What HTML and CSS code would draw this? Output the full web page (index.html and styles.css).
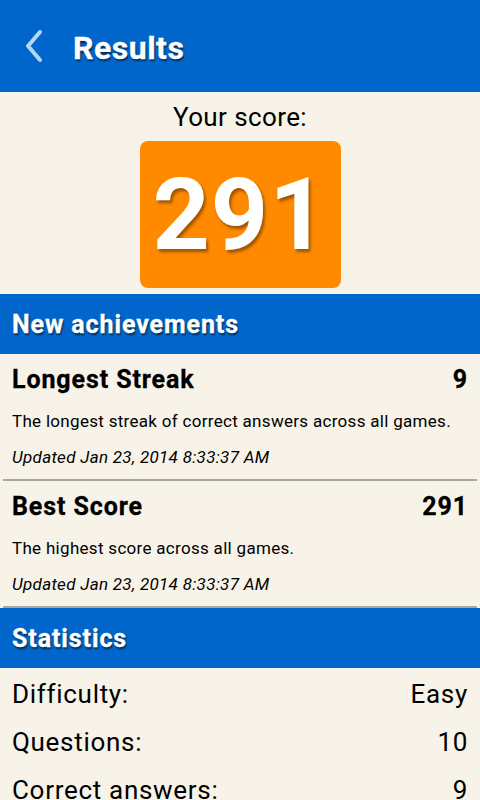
FILE: index.html
```html
<!doctype html>
<html lang="en">
  <head>
    <title>Results</title>
    <link rel="stylesheet" href="styles.css">
  </head>
  <body>
    <header class="topbar">
      <svg class="back" width="24" height="34" viewBox="0 0 24 34">
        <polyline points="17,3 5,17 17,31" fill="none" stroke="#b6d6f6" stroke-width="4" stroke-linecap="round" stroke-linejoin="round"/>
      </svg>
      <h1>Results</h1>
    </header>

    <section class="score">
      <div class="score-label">Your score:</div>
      <div class="score-box">291</div>
    </section>

    <h2 class="section-title">New achievements</h2>
    <div class="achievement">
      <div class="achievement-head">
        <span>Longest Streak</span>
        <span>9</span>
      </div>
      <p class="achievement-desc">The longest streak of correct answers across all games.</p>
      <p class="achievement-date">Updated Jan 23, 2014 8:33:37 AM</p>
    </div>
    <div class="achievement">
      <div class="achievement-head">
        <span>Best Score</span>
        <span>291</span>
      </div>
      <p class="achievement-desc">The highest score across all games.</p>
      <p class="achievement-date">Updated Jan 23, 2014 8:33:37 AM</p>
    </div>

    <h2 class="section-title">Statistics</h2>
    <div class="stats">
      <div class="stat"><span>Difficulty:</span><span>Easy</span></div>
      <div class="stat"><span>Questions:</span><span>10</span></div>
      <div class="stat"><span>Correct answers:</span><span>9</span></div>
    </div>
  </body>
</html>
```

FILE: styles.css
```css
body {
  font-family: Roboto, "Liberation Sans", sans-serif;
  background-color: #f7f3e8;
  color: #000;
  margin: 0;
  padding: 0;
  width: 480px;
  height: 800px;
  overflow: hidden;
}

.topbar {
  background-color: #0066cc;
  height: 92px;
  display: flex;
  align-items: center;
  padding-left: 23px;
  box-sizing: border-box;
}

.back {
  display: block;
  margin-right: 26px;
}

.topbar h1 {
  margin: 4px 0 0;
  color: #fff;
  font-size: 32px;
  font-weight: bold;
  letter-spacing: 0.5px;
  -webkit-text-stroke: 0.3px #fff;
  text-shadow: 1px 2px 2px rgba(0, 0, 0, 0.6);
}

.score {
  display: flex;
  flex-direction: column;
  align-items: center;
  padding-top: 7px;
  height: 202px;
  box-sizing: border-box;
}

.score-label {
  font-size: 26px;
  line-height: 36px;
  letter-spacing: 0.4px;
}

.score-box {
  margin-top: 6px;
  width: 201px;
  height: 147px;
  background-color: #ff8a00;
  border-radius: 8px;
  color: #fff;
  font-size: 100px;
  font-weight: bold;
  letter-spacing: 1px;
  line-height: 147px;
  text-align: center;
  text-shadow: 2px 3px 3px rgba(120, 60, 0, 0.7);
}

.section-title {
  margin: 0;
  height: 60px;
  line-height: 62px;
  background-color: #0066cc;
  color: #fff;
  font-size: 25px;
  font-weight: bold;
  letter-spacing: 0.9px;
  -webkit-text-stroke: 0.3px #fff;
  padding-left: 12px;
  text-shadow: 1px 2px 2px rgba(0, 0, 0, 0.6);
}

.achievement {
  height: 127px;
  box-sizing: border-box;
  border-bottom: 2px solid #a8a8a8;
  margin: 0 3px;
  padding: 10px 9px 0;
}

.achievement-head {
  display: flex;
  justify-content: space-between;
  font-size: 25px;
  font-weight: bold;
  letter-spacing: 0.9px;
  -webkit-text-stroke: 0.3px #000;
  line-height: 32px;
}

.achievement-desc {
  margin: 14px 0 0;
  font-size: 17px;
  letter-spacing: 0.3px;
  line-height: 22px;
}

.achievement-date {
  margin: 14px 0 0;
  font-size: 17px;
  letter-spacing: 0.3px;
  line-height: 22px;
  font-style: italic;
}

.stats {
  padding: 2px 12px 0;
}

.stat {
  display: flex;
  justify-content: space-between;
  font-size: 26px;
  letter-spacing: 0.7px;
  line-height: 48px;
}
```
